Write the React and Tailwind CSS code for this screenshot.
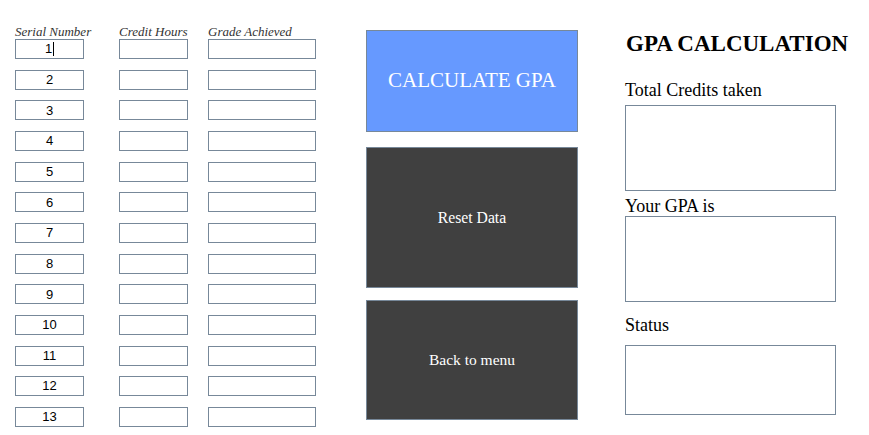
const serif = "font-['Liberation_Serif','Times_New_Roman',serif]";
const sans = "font-['Liberation_Sans',Arial,sans-serif]";
const box = 'border border-[#778899] bg-white';

const rows = Array.from({ length: 13 }, (_, i) => i + 1);

export default function App() {
  return (
    <div className={`w-[869px] h-[435px] bg-white flex overflow-hidden ${serif}`}>
      {/* grade table */}
      <div className="pl-[15px] pt-[25px] w-[366px]">
        <div className="flex text-[13px] italic leading-[14px] text-[#333] whitespace-nowrap">
          <span className="w-[104px]">Serial Number</span>
          <span className="w-[89px]">Credit Hours</span>
          <span>Grade Achieved</span>
        </div>
        <div className="flex flex-col gap-y-[10.67px]">
          {rows.map((n) => (
            <div key={n} className="flex h-[20px]">
              <div className={`${box} w-[69px] h-[20px] flex items-center justify-center text-[13px] text-black ${sans}`}>
                {n}
                {n === 1 && <span className="w-px h-[14px] bg-black ml-[1px]" />}
              </div>
              <div className={`${box} w-[69px] h-[20px] ml-[35px]`} />
              <div className={`${box} w-[108px] h-[20px] ml-[20px]`} />
            </div>
          ))}
        </div>
      </div>

      {/* buttons */}
      <div className="pt-[30px] flex flex-col w-[212px]">
        <button className="h-[102px] border border-[#778899] bg-[#6699ff] text-white text-[21px]">
          CALCULATE GPA
        </button>
        <button className="h-[141px] mt-[15px] border border-[#778899] bg-[#404040] text-white text-[15.7px]">
          Reset Data
        </button>
        <button className="h-[120px] mt-[12px] border border-[#778899] bg-[#404040] text-white text-[15.5px]">
          Back to menu
        </button>
      </div>

      {/* results */}
      <div className="ml-[47px] pt-[29px] w-[222px] text-black">
        <h1 className="text-[23px] font-bold leading-[30px] pl-[1px] whitespace-nowrap">GPA CALCULATION</h1>
        <p className="text-[18px] leading-[22px] mt-[20px]">Total Credits taken</p>
        <div className={`${box} w-[211px] h-[86px] mt-[4px]`} />
        <p className="text-[18px] leading-[22px] mt-[4px]">Your GPA is</p>
        <div className={`${box} w-[211px] h-[86px] mt-[-1px]`} />
        <p className="text-[18px] leading-[22px] mt-[12px]">Status</p>
        <div className={`${box} w-[211px] h-[70px] mt-[9px]`} />
      </div>
    </div>
  );
}
